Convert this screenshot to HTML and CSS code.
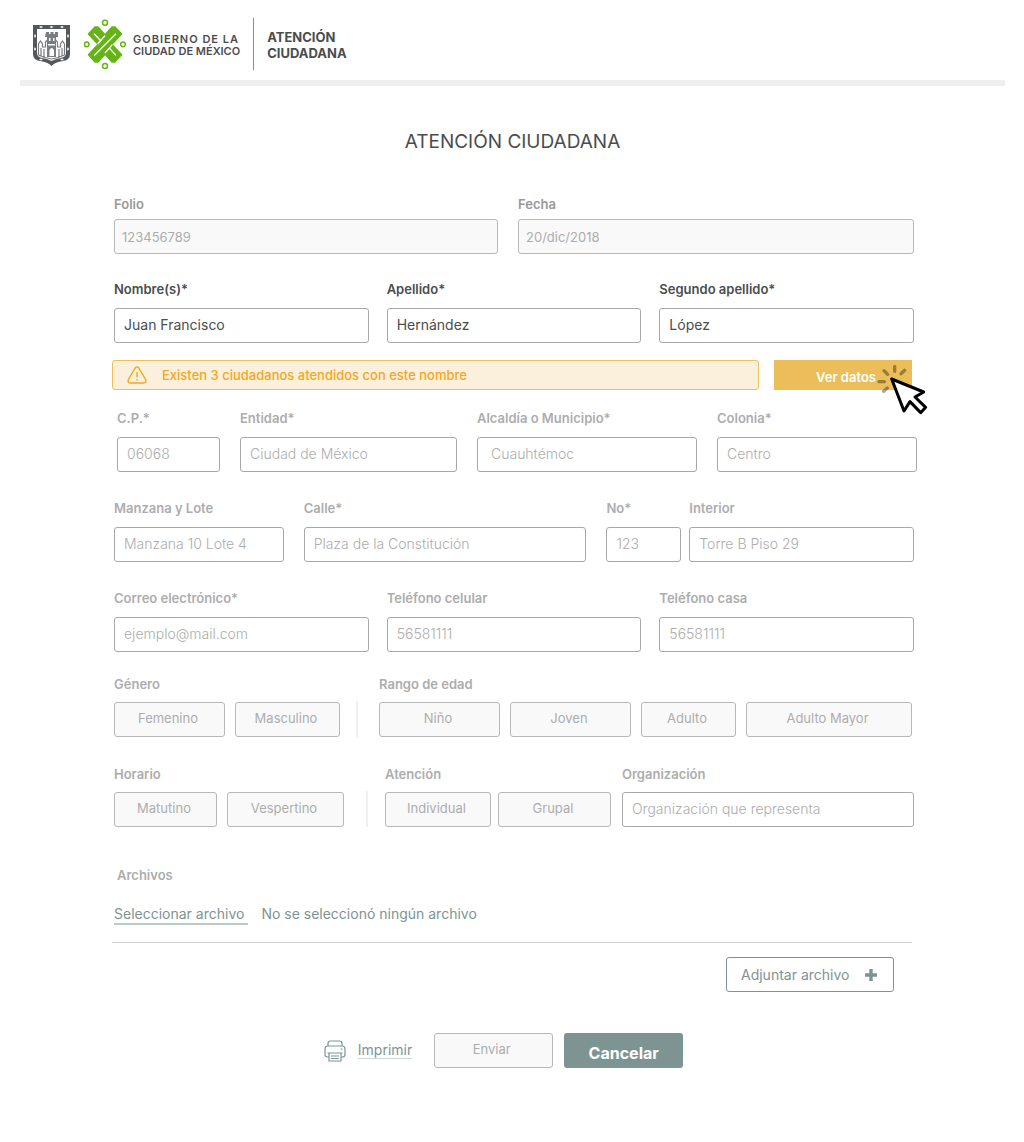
FILE: index.html
```html
<!DOCTYPE html>
<html lang="es">
<head>
<meta charset="utf-8">
<meta name="viewport" content="width=device-width, initial-scale=1">
<title>Atención Ciudadana</title>
<link rel="stylesheet" href="styles.css">
</head>
<body>
<header class="site-header">
  <svg class="shield" viewBox="0 0 39 43" aria-hidden="true">
    <path d="M1 1H38V30Q38 36 31 37Q23 38 19.500 42Q16 38 8 37Q1 36 1 30Z" fill="#55585a"/>
    <path d="M5 5H34V29Q34 33 29 34Q23 35 19.500 37Q16 35 10 34Q5 33 5 29Z" fill="#fff"/>
    <path d="M14 8h3v2h1.500v-2h3v2h1.500v-2h3v5h-2v20h-9V13h-2z" fill="#7a7d7f"/>
    <path d="M6.500 31V20l2-3l2 3v3h3v-5l2-2M32.500 31V20l-2-3l-2 3v3h-3v-5l-2-2M9 24v8M12 25v8M27 25v8M30 24v8M6.500 31q6 3 13 4q7-1 13-4" fill="none" stroke="#7a7d7f" stroke-width="1.200"/>
    <path d="M17 14h1.500v3H17zM21 14h1.500v3H21zM17.500 32v-6q2-4 4.500 0v6zM16 20h7v1.500h-7z" fill="#fff"/>
    <g fill="#fff"><path d="M7 3l2-1 2 1-2 1zM17.500 3l2-1 2 1-2 1zM28 3l2-1 2 1-2 1zM7 35.500l2-1 2 1-2 1zM28 35.500l2-1 2 1-2 1z"/><path d="M3 10l1 2-1 2-1-2zM3 23l1 2-1 2-1-2zM36 10l1 2-1 2-1-2zM36 23l1 2-1 2-1-2z"/></g>
  </svg>
  <svg class="emblem" viewBox="205 28 126 153" aria-hidden="true">
    <g fill="none" stroke="#65b416" stroke-width="4.500"><circle cx="268" cy="39" r="7.500"/><circle cx="213" cy="104" r="7"/><circle cx="322" cy="104" r="7"/><circle cx="268" cy="169" r="7.500"/></g>
    <path d="M238 52H247L268 75L289 52H298L318 73L289 104L318 135L298 157H289L268 134L247 157H238L218 135L247 104L218 73Z" fill="#65b416" stroke="#65b416" stroke-width="4" stroke-linejoin="round"/>
    <path d="M268 78L246 103M290 105L268 130M301 72L235 138M235 72L254 92M282 116L301 137" fill="none" stroke="#fff" stroke-width="4"/>
  </svg>
  <p class="government"><span class="tracked">GOBIERNO DE LA</span><br>CIUDAD DE MÉXICO</p>
  <p class="department">ATENCIÓN<br>CIUDADANA</p>
</header>

<main class="page">
  <h1>ATENCIÓN CIUDADANA</h1>
  <form class="form">
    <div class="row row-record">
      <div class="field"><label for="folio">Folio</label><input id="folio" value="123456789" disabled></div>
      <div class="field"><label for="fecha">Fecha</label><input id="fecha" value="20/dic/2018" disabled></div>
    </div>
    <div class="row row-thirds row-active">
      <div class="field"><label for="nombre">Nombre(s)*</label><input id="nombre" value="Juan Francisco"></div>
      <div class="field"><label for="apellido">Apellido*</label><input id="apellido" value="Hernández"></div>
      <div class="field"><label for="apellido2">Segundo apellido*</label><input id="apellido2" value="López"></div>
    </div>
    <div class="notice-row">
      <p class="notice" role="status">
        <svg viewBox="0 0 20 18" aria-hidden="true"><path d="M8.300 2Q10-.3 11.700 2L18.600 13.500Q19.800 16.800 16.800 17H3.200Q.2 16.800 1.400 13.500ZM10 6v5.500M10 13v1.500" fill="none" stroke="#f5a623" stroke-width="1.400"/></svg>
        Existen 3 ciudadanos atendidos con este nombre
      </p>
      <button type="button" class="view-data">Ver datos
        <svg class="cursor" viewBox="408 42 156 156" aria-hidden="true">
          <path d="M464 49V64M432 62L443 73M494 61L483 71M417 95H433M431 124L442 114" fill="none" stroke="#000" stroke-opacity=".35" stroke-width="10" stroke-linecap="round"/>
          <path d="M455 87L551 126L525 141L557 172L542 188L510 155L492 183Z" fill="#fff" stroke="#000" stroke-width="9" stroke-linejoin="round"/>
        </svg>
      </button>
    </div>
    <div class="row row-place">
      <div class="field"><label for="cp">C.P.*</label><input id="cp" placeholder="06068"></div>
      <div class="field"><label for="entidad">Entidad*</label><input id="entidad" placeholder="Ciudad de México"></div>
      <div class="field field-indented"><label for="alcaldia">Alcaldía o Municipio*</label><input id="alcaldia" placeholder="Cuauhtémoc"></div>
      <div class="field"><label for="colonia">Colonia*</label><input id="colonia" placeholder="Centro"></div>
    </div>
    <div class="row row-street">
      <div class="field"><label for="manzana">Manzana y Lote</label><input id="manzana" placeholder="Manzana 10 Lote 4"></div>
      <div class="field"><label for="calle">Calle*</label><input id="calle" placeholder="Plaza de la Constitución"></div>
      <div class="number-pair">
        <div class="field"><label for="numero">No*</label><input id="numero" placeholder="123"></div>
        <div class="field"><label for="interior">Interior</label><input id="interior" placeholder="Torre B Piso 29"></div>
      </div>
    </div>
    <div class="row row-thirds">
      <div class="field"><label for="correo">Correo electrónico*</label><input id="correo" type="email" placeholder="ejemplo@mail.com"></div>
      <div class="field"><label for="celular">Teléfono celular</label><input id="celular" type="tel" placeholder="56581111"></div>
      <div class="field"><label for="casa">Teléfono casa</label><input id="casa" type="tel" placeholder="56581111"></div>
    </div>
    <div class="row row-person">
      <div class="field" role="group" aria-labelledby="genero">
        <span class="label" id="genero">Género</span>
        <div class="options options-gender"><button type="button" class="option">Femenino</button><button type="button" class="option">Masculino</button></div>
      </div>
      <span class="divider"></span>
      <div class="field" role="group" aria-labelledby="edad">
        <span class="label" id="edad">Rango de edad</span>
        <div class="options options-age"><button type="button" class="option">Niño</button><button type="button" class="option">Joven</button><button type="button" class="option">Adulto</button><button type="button" class="option">Adulto Mayor</button></div>
      </div>
    </div>
    <div class="row row-service">
      <div class="field" role="group" aria-labelledby="horario">
        <span class="label" id="horario">Horario</span>
        <div class="options options-shift"><button type="button" class="option">Matutino</button><button type="button" class="option">Vespertino</button></div>
      </div>
      <span class="divider"></span>
      <div class="service-pair">
        <div class="field" role="group" aria-labelledby="atencion">
          <span class="label" id="atencion">Atención</span>
          <div class="options options-service"><button type="button" class="option">Individual</button><button type="button" class="option">Grupal</button></div>
        </div>
        <div class="field"><label for="organizacion">Organización</label><input id="organizacion" placeholder="Organización que representa"></div>
      </div>
    </div>
    <section class="files">
      <h2 class="label">Archivos</h2>
      <div class="file-row"><button type="button" class="file-select">Seleccionar archivo</button><span>No se seleccionó ningún archivo</span></div>
      <button type="button" class="attach">Adjuntar archivo
        <svg viewBox="0 0 12 12" aria-hidden="true"><path d="M6 0V12M0 6H12" stroke="#7e9493" stroke-width="3.400"/></svg>
      </button>
    </section>
    <div class="actions">
      <a class="print" href="#imprimir">
        <svg viewBox="0 0 22 22" aria-hidden="true"><g fill="none" stroke="#7e9493" stroke-width="1.200" stroke-linejoin="round"><path d="M4 6V3.500Q4 1 6.500 1H15.500Q18 1 18 3.500V6M4.500 17H3.500Q1 17 1 14.500V9Q1 6 4 6H18Q21 6 21 9V14.500Q21 17 18.500 17H17.500M3.500 13H18.500M5 13V21H17V13M7 16H15M7 18.500H15M16.500 9H18.500"/></g></svg>
        <span>Imprimir</span>
      </a>
      <button type="submit" class="option submit">Enviar</button>
      <button type="button" class="cancel">Cancelar</button>
    </div>
  </form>
</main>
</body>
</html>
```
FILE: styles.css
```css
* { box-sizing: border-box; }
body { margin: 0; background: #fff; color: #4a4d4e; font-family: Inter, "Open Sans", sans-serif; font-size: 14px; }
p, h1, h2 { margin: 0; }
button, input { font: inherit; color: inherit; }
svg { display: block; flex: none; }
.site-header { display: flex; align-items: center; height: 86px; margin: 0 19px 0 20px; padding: 8px 0 0 12px; border-bottom: 6px solid #efefef; }
.shield { width: 39px; height: 43px; margin-top: 2px; }
.emblem { width: 42px; height: 51px; margin-left: 13px; }
.government { margin-left: 7px; padding-top: 2px; font-size: 11px; line-height: 12px; font-weight: 600; }
.tracked { letter-spacing: 1px; }
.department { display: flex; align-items: center; height: 52px; margin-left: 13px; padding: 2px 0 0 13px; border-left: 1px solid #8b8d8e; font-size: 13px; line-height: 16px; font-weight: 700; }
.page { padding: 44px 110px 74px 114px; }
h1 { margin-right: 3px; font-size: 19px; line-height: 24px; font-weight: 400; text-align: center; }
.form { margin-top: 42px; }
.row { display: grid; gap: 20px; margin-top: 28px; color: #adadad; }
.row-record { grid-template-columns: 384fr 396fr; color: #999; }
.row-thirds { grid-template-columns: repeat(3, 1fr); gap: 18px; }
.row-active { margin-top: 27px; color: #4a4d4e; }
.row-place { grid-template-columns: 103fr 217fr 220fr 200fr; margin: 20px -3px 0 3px; }
.row-street { grid-template-columns: 170fr 283fr 308fr; }
.number-pair { display: grid; grid-template-columns: 75fr 225fr; gap: 8px; }
.row-person { grid-template-columns: 226fr 39px 533fr; gap: 0; margin: 24px 2px 0 0; }
.row-service { grid-template-columns: 230fr 41px 529fr; gap: 0; margin-top: 29px; }
.service-pair { display: grid; grid-template-columns: 226fr 292fr; gap: 11px; }
.field { display: flex; flex-direction: column; gap: 11px; min-width: 0; }
.row-record .field { gap: 7px; }
.row-person .field, .row-service .field { gap: 10px; }
label, .label { font-size: 13px; line-height: 16px; font-weight: 600; white-space: nowrap; }
input { width: 100%; height: 35px; padding: 0 9px 2px; border: 1px solid #a8a8a8; border-radius: 3px; background: #fff; }
input::placeholder { color: #adadad; opacity: 1; font-weight: 300; }
input:disabled { padding: 0 7px; border-color: #b8b8b8; background: #f9f9f9; color: #adadad; font-size: 13px; }
.field-indented input { padding-left: 13px; }
.notice-row { display: grid; grid-template-columns: 647fr 138fr; gap: 15px; margin: 17px 2px 0 -2px; }
.notice { display: flex; align-items: center; gap: 15px; height: 30px; padding-left: 14px; border: 1px solid #edc05c; border-radius: 3px; background: #faf0dc; color: #f5a623; font-size: 13px; font-weight: 500; }
.notice svg { width: 20px; height: 18px; }
.view-data { position: relative; height: 30px; padding: 3px 0 0 6px; border: 0; background: #ecbe5a; color: #fff; font-size: 13px; font-weight: 600; }
.cursor { position: absolute; top: 4px; right: -16px; width: 52px; height: 52px; }
.divider { align-self: end; width: 2px; height: 36px; margin-left: 16px; background: #efefef; }
.row-service .divider { margin-left: 22px; }
.options { display: grid; gap: 10px; }
.options-gender { grid-template-columns: 111fr 105fr; }
.options-age { grid-template-columns: 121fr 121fr 95fr 166fr; }
.options-shift { grid-template-columns: 103fr 117fr; }
.options-service { grid-template-columns: 106fr 113fr; gap: 7px; }
.option { height: 35px; padding: 0 3px 3px 0; border: 1px solid #b8b8b8; border-radius: 3px; background: #f9f9f9; color: #adadad; font-size: 13px; }
.files { display: flex; flex-direction: column; margin: 40px 2px 0 -2px; color: #7e9493; }
.files .label { padding-left: 5px; color: #adadad; }
.file-row { display: flex; align-items: flex-start; gap: 13px; height: 39px; margin-top: 21px; padding-left: 2px; border-bottom: 1px solid #d0d0d0; line-height: 20px; }
.file-select { padding: 0 4px 0 0; border: 0; border-bottom: 2px solid #bccaca; background: none; line-height: 19px; }
.attach { display: flex; align-items: center; align-self: flex-end; justify-content: space-between; width: 168px; height: 35px; margin: 14px 18px 0 0; padding: 0 16px 0 14px; border: 1px solid #7e9493; border-radius: 3px; background: #fff; }
.attach svg { width: 12px; height: 12px; }
.actions { display: flex; justify-content: center; gap: 11px; margin: 41px 21px 0 0; }
.print { display: flex; align-items: center; gap: 12px; margin-right: 11px; color: #7e9493; text-decoration: none; }
.print svg { width: 22px; height: 22px; }
.print span { border-bottom: 1px solid #ccd6d6; line-height: 16px; }
.submit, .cancel { width: 119px; }
.submit { padding-right: 4px; }
.cancel { height: 35px; padding: 5px 0 0; border: 0; border-radius: 3px; background: #7e9493; color: #fff; font-size: 16px; font-weight: 700; }
```
